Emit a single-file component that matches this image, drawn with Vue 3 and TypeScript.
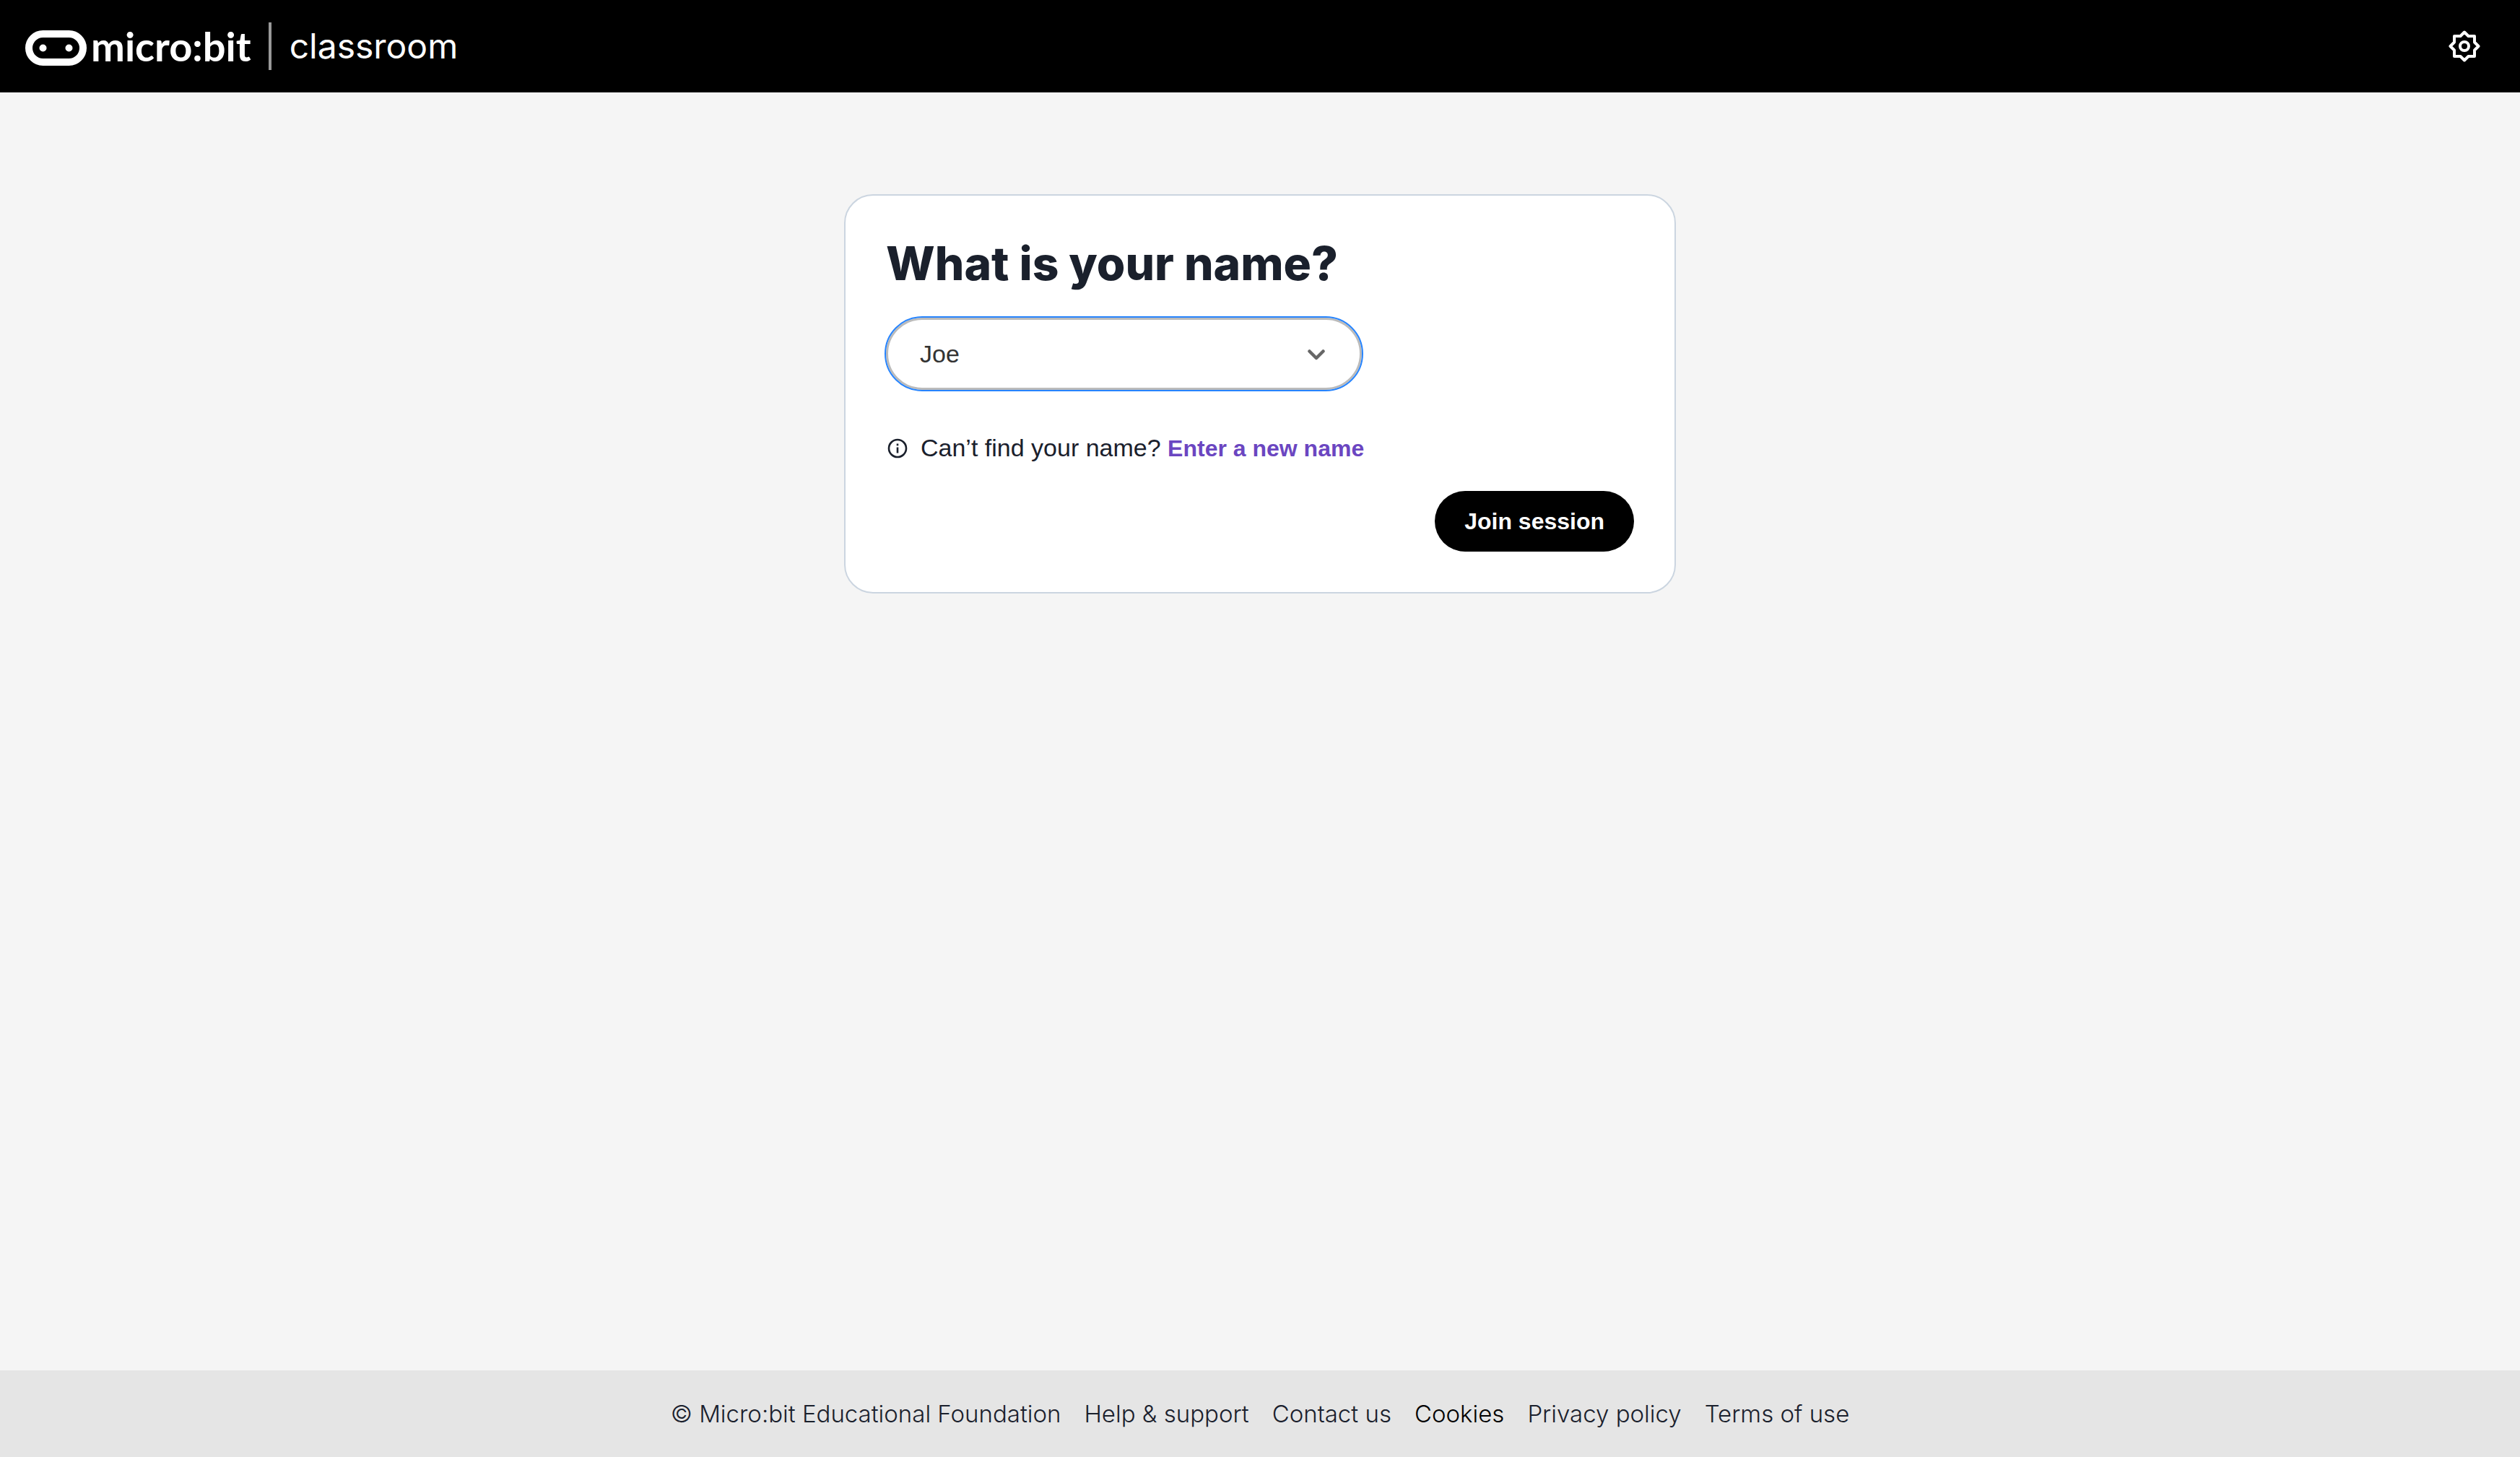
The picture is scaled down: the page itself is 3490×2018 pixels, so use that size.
<script setup lang="ts">
import { ref } from 'vue'

interface FooterLink {
  label: string
  strong?: boolean
}

const names: string[] = ['Joe']
const selected = ref<string>('Joe')

const footerLinks: FooterLink[] = [
  { label: '© Micro:bit Educational Foundation' },
  { label: 'Help & support' },
  { label: 'Contact us' },
  { label: 'Cookies', strong: true },
  { label: 'Privacy policy' },
  { label: 'Terms of use' },
]
</script>

<template>
  <div class="page">
    <header class="header">
      <a class="brand" href="#" aria-label="micro:bit classroom">
        <svg class="brand-mark" viewBox="0 0 85 49" aria-hidden="true">
          <rect x="5" y="5" width="75" height="39" rx="19.5" fill="none" stroke="#fff" stroke-width="10" />
          <circle cx="24.5" cy="24.5" r="5" fill="#fff" />
          <circle cx="60.5" cy="24.5" r="5" fill="#fff" />
        </svg>
        <span class="brand-name">micro:bit</span>
        <span class="brand-divider"></span>
        <span class="product-name">classroom</span>
      </a>
      <button class="settings" type="button" aria-label="Settings">
        <svg viewBox="0 0 44 44" aria-hidden="true" fill="none" stroke="#fff" stroke-width="4">
          <path
            d="M22 2.5 L27.5 8 H36 V16.5 L41.5 22 L36 27.5 V36 H27.5 L22 41.5 L16.5 36 H8 V27.5 L2.5 22 L8 16.5 V8 H16.5 Z"
            stroke-linejoin="round"
          />
          <circle cx="22" cy="22" r="6" />
        </svg>
      </button>
    </header>

    <main class="main">
      <form class="card" @submit.prevent>
        <h1 class="title"><label for="student-name">What is your name?</label></h1>
        <div class="select-wrap">
          <select id="student-name" v-model="selected" class="select">
            <option v-for="name in names" :key="name" :value="name">{{ name }}</option>
          </select>
          <svg class="chevron" viewBox="0 0 24 15" aria-hidden="true">
            <path
              d="M2.5 2.5 L12 12 L21.5 2.5"
              fill="none"
              stroke="#666"
              stroke-width="4.5"
              stroke-linecap="round"
              stroke-linejoin="round"
            />
          </svg>
        </div>
        <p class="help">
          <svg class="info" viewBox="0 0 28 28" aria-hidden="true">
            <circle cx="14" cy="14" r="12" fill="none" stroke="#1a202c" stroke-width="2.6" />
            <rect x="12.7" y="12.5" width="2.6" height="8" fill="#1a202c" />
            <rect x="12.7" y="7.5" width="2.6" height="2.8" fill="#1a202c" />
          </svg>
          <span>Can’t find your name? <a class="link" href="#">Enter a new name</a></span>
        </p>
        <div class="actions">
          <button class="join" type="submit">Join session</button>
        </div>
      </form>
    </main>

    <footer class="footer">
      <a
        v-for="link in footerLinks"
        :key="link.label"
        class="footer-link"
        :class="{ strong: link.strong }"
        href="#"
      >{{ link.label }}</a>
    </footer>
  </div>
</template>

<style>
body {
  margin: 0;
  background: #f5f5f5;
}
</style>

<style scoped>
.page {
  display: flex;
  flex-direction: column;
  min-height: 100vh;
  background: #f5f5f5;
  color: #1a202c;
  font-family: "Liberation Sans", Arial, sans-serif;
  font-size: 34px;
  line-height: 48px;
}

.header {
  display: flex;
  align-items: center;
  justify-content: space-between;
  height: 128px;
  padding: 0 55px 0 35px;
  background: #000;
}

.brand {
  display: flex;
  align-items: center;
  color: #fff;
  font-family: Lato, sans-serif;
  text-decoration: none;
}

.brand-mark {
  width: 85px;
  height: 49px;
  margin: 4px 6px 0 0;
}

.brand-name {
  font-size: 56px;
  font-weight: 700;
  line-height: 66px;
}

.brand-divider {
  width: 4px;
  height: 66px;
  margin: 0 25px 0 24px;
  background: #999;
}

.product-name {
  font-family: Inter, sans-serif;
  font-size: 48px;
  line-height: 66px;
}

.settings {
  display: flex;
  padding: 0;
  border: 0;
  background: none;
}

.settings svg {
  width: 44px;
  height: 44px;
}

.main {
  flex: 1;
  padding: 141px 32px 64px;
}

.card {
  box-sizing: border-box;
  max-width: 1152px;
  margin: 0 auto;
  padding: 56px;
  border: 2px solid #cbd5e0;
  border-radius: 40px;
  background: #fff;
}

.title {
  margin: 0 0 37px;
  font-family: Inter, sans-serif;
  font-size: 64px;
  font-weight: 800;
  line-height: 76px;
}

.select-wrap {
  position: relative;
  max-width: 659px;
}

.select {
  display: block;
  width: 100%;
  height: 100px;
  padding: 0 96px 0 44px;
  border: 3px solid #bbb;
  border-radius: 50px;
  outline: 2px solid #2684ff;
  outline-offset: 0;
  background: #fff;
  color: #333;
  font: inherit;
  appearance: none;
}

.chevron {
  position: absolute;
  top: 44px;
  right: 51px;
  width: 24px;
  height: 15px;
  pointer-events: none;
}

.help {
  display: flex;
  align-items: center;
  gap: 18px;
  margin: 56px 0 35px;
}

.info {
  width: 28px;
  height: 28px;
  margin-left: 2px;
}

.link {
  color: #6b46c1;
  font-size: 32px;
  font-weight: 700;
  text-decoration: none;
}

.actions {
  display: flex;
  justify-content: flex-end;
}

.join {
  height: 84px;
  padding: 0 41px;
  border: 0;
  border-radius: 42px;
  background: #000;
  color: #fff;
  font: inherit;
  font-size: 32px;
  font-weight: 700;
}

.footer {
  display: flex;
  flex-wrap: wrap;
  align-items: center;
  justify-content: center;
  gap: 0 32px;
  min-height: 120px;
  background: #e5e5e5;
}

.footer-link {
  color: #1a202c;
  font-family: Inter, "Liberation Sans", sans-serif;
  font-size: 33px;
  font-weight: 300;
  text-decoration: none;
}

.footer-link.strong {
  color: #000;
}
</style>
